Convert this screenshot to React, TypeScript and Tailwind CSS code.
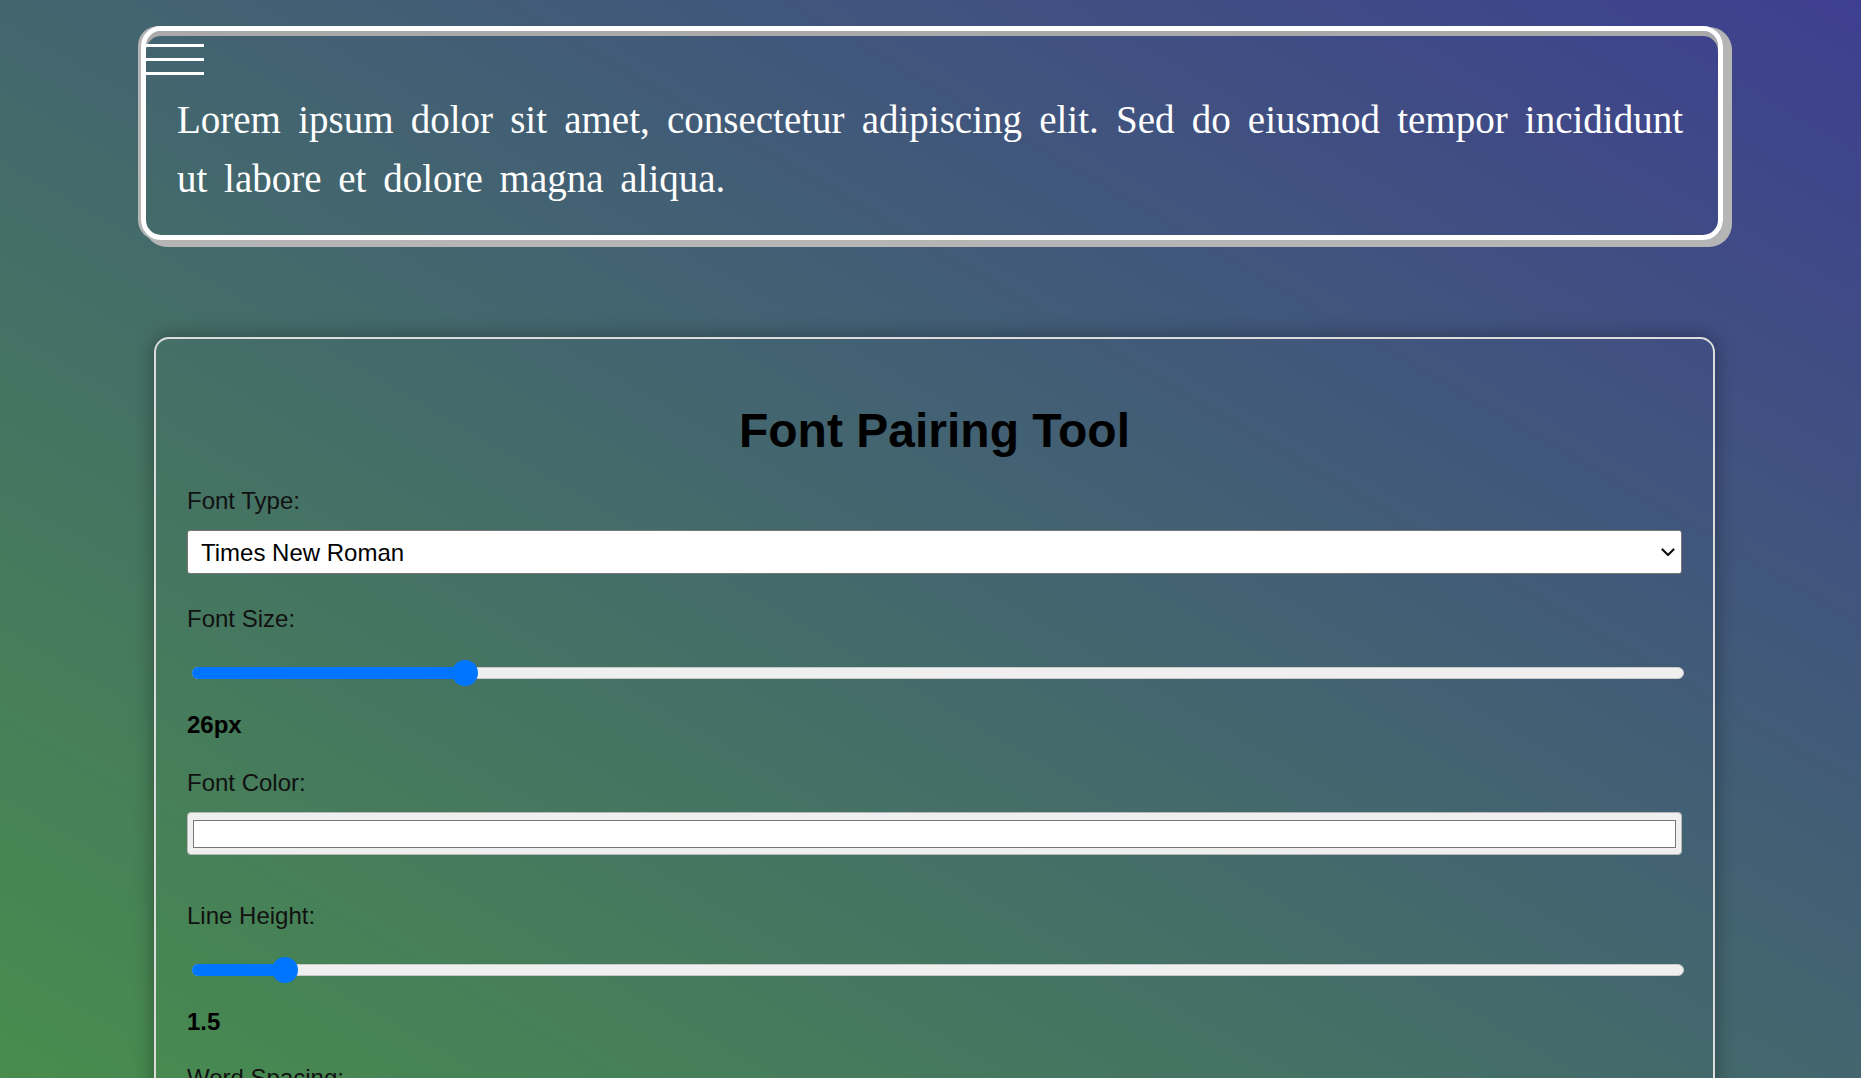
import React, { useState } from 'react';

const sans = "font-['Liberation_Sans',Arial,Helvetica,sans-serif]";

// native-looking range: thumb centre = radius + fraction * (width - diameter)
const RangeBar: React.FC<{ value: number; min: number; max: number }> = ({ value, min, max }) => {
  const f = (value - min) / (max - min);
  const pos = `calc(12px + ${f} * (100% - 26px))`;
  return (
    <div className="relative ml-[5px] mr-[-2px] h-[26px]">
      <div className="absolute left-0 right-0 top-[7px] h-[12px] rounded-full border border-[#c9c9c9] bg-[#efefef]" />
      <div className="absolute left-0 top-[7px] h-[12px] rounded-l-full bg-[#0075ff]" style={{ width: pos }} />
      <div
        className="absolute top-0 h-[26px] w-[26px] -translate-x-1/2 rounded-full bg-[#0075ff]"
        style={{ left: pos }}
      />
    </div>
  );
};

const Label: React.FC<{ children: React.ReactNode; className?: string }> = ({ children, className }) => (
  <label className={`block h-[24px] text-[24px] leading-[24px] text-[#111] ${className ?? ''}`}>{children}</label>
);

const Value: React.FC<{ children: React.ReactNode; className?: string }> = ({ children, className }) => (
  <div className={`h-[24px] text-[24px] font-bold leading-[24px] text-black ${className ?? ''}`}>{children}</div>
);

const App: React.FC = () => {
  const [fontType] = useState('Times New Roman');
  const fontSize = 26;
  const lineHeight = 1.5;

  return (
    <div
      className={`min-h-screen bg-fixed bg-[linear-gradient(to_top_right,#488d4d,#3e3f90)] pt-[26px] pb-[80px] ${sans}`}
    >
      {/* preview */}
      <div className="ml-[141px] w-[1582px] rounded-[20px] border-[5px] border-white pt-[13px] pb-[27px] shadow-[inset_0_5px_0_#a9a9a9,-3px_0_0_0_#b5b5b5,6px_4px_0_3px_#b5b5b5]">
        <div className="ml-[-2px] flex w-[60px] flex-col gap-[11px]">
          <span className="block h-[3px] bg-white" />
          <span className="block h-[3px] bg-white" />
          <span className="block h-[3px] bg-white" />
        </div>
        <p className="mt-[15px] pl-[31px] pr-[35px] text-justify font-['Liberation_Serif','Times_New_Roman',serif] text-[39px] leading-[59px] text-white [word-spacing:7px]">
          Lorem ipsum dolor sit amet, consectetur adipiscing elit. Sed do eiusmod tempor incididunt ut labore et
          dolore magna aliqua.
        </p>
      </div>

      {/* controls */}
      <div className="ml-[154px] mt-[97px] w-[1561px] rounded-[15px] border-2 border-[#dcdcdc] pt-[65px] pb-[40px] pl-[31px] pr-[31px] shadow-[0_0_20px_rgba(0,0,0,0.35)]">
        <h1 className="m-0 text-center text-[48px] font-bold leading-[54px] text-black">Font Pairing Tool</h1>

        <Label className="mt-[31px]">Font Type:</Label>
        <div className="mt-[17px] flex h-[44px] items-center justify-between rounded-[3px] border border-[#767676] bg-white pl-[13px] pr-[6px] pt-[2px]">
          <span className="text-[24px] leading-[28px] text-black">{fontType}</span>
          <svg width="14" height="9" viewBox="0 0 14 9" fill="none" className="mb-[2px]">
            <path d="M1.5 1.5l5.5 5.5 5.5-5.5" stroke="#111" strokeWidth="2.2" strokeLinecap="round" strokeLinejoin="round" />
          </svg>
        </div>

        <Label className="mt-[33px]">Font Size:</Label>
        <div className="mt-[29px]">
          <RangeBar value={fontSize} min={10} max={100} />
        </div>
        <Value className="mt-[27px]">{fontSize}px</Value>

        <Label className="mt-[34px]">Font Color:</Label>
        <div className="mt-[17px] h-[43px] rounded-[4px] border border-[#b8b8b8] bg-[#efefef] pt-[7px] pb-[6px] pl-[5px] pr-[5px]">
          <div className="h-full w-full border border-[#777] bg-white" />
        </div>

        <Label className="mt-[49px]">Line Height:</Label>
        <div className="mt-[29px]">
          <RangeBar value={lineHeight} min={1} max={10} />
        </div>
        <Value className="mt-[27px]">{lineHeight}</Value>

        <Label className="mt-[32px]">Word Spacing:</Label>
        <div className="mt-[29px]">
          <RangeBar value={7} min={0} max={50} />
        </div>
        <Value className="mt-[27px]">7px</Value>

        <Label className="mt-[32px]">Letter Spacing:</Label>
        <div className="mt-[29px]">
          <RangeBar value={0} min={0} max={20} />
        </div>
        <Value className="mt-[27px]">0px</Value>
      </div>
    </div>
  );
};

export default App;
